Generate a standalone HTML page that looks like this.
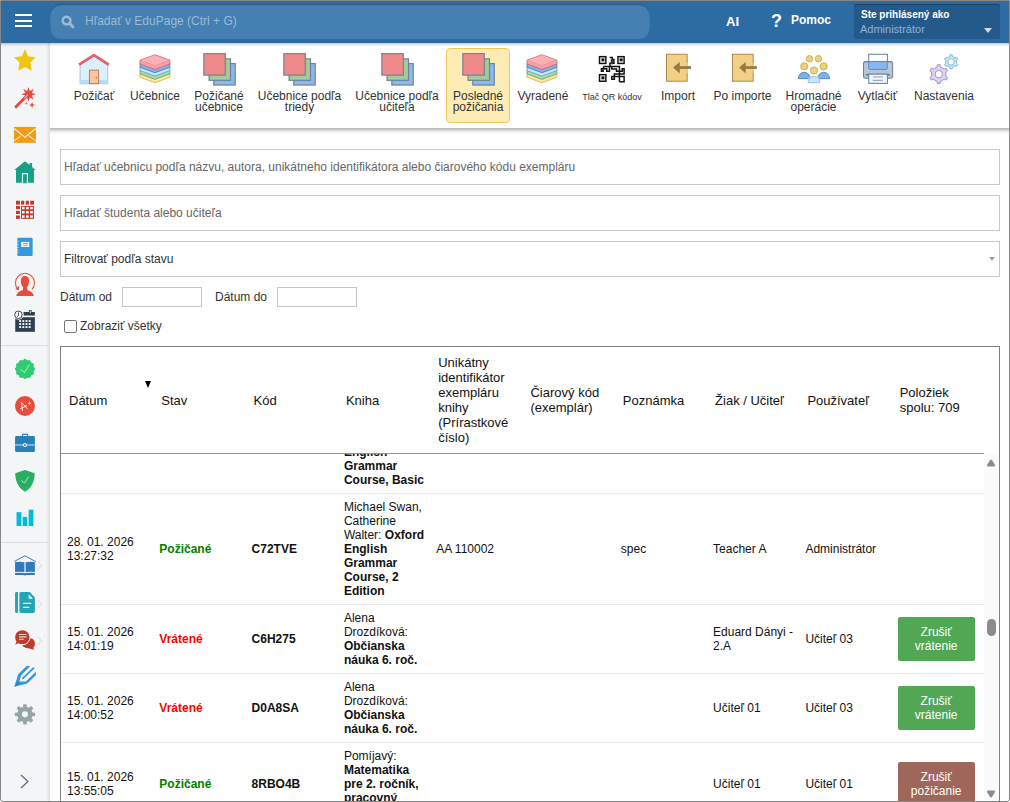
<!DOCTYPE html><html><head><meta charset="utf-8"><style>
*{box-sizing:border-box;margin:0;padding:0}
html,body{width:1010px;height:802px;overflow:hidden;background:#fff;font-family:"Liberation Sans",sans-serif;color:#333}
#frame{position:absolute;left:0;top:0;width:1010px;height:802px;overflow:hidden}
#border{position:absolute;left:0;top:0;width:1010px;height:802px;border:1px solid #878787;border-radius:0 0 3px 3px;z-index:50}
.a{position:absolute}
#hdr{position:absolute;left:1px;top:1px;width:1008px;height:42px;background:#2c6ca3}
#search{position:absolute;left:50px;top:4px;width:600px;height:35px;border-radius:11px;background:#4480b2;box-shadow:inset 0 1px 1.5px rgba(0,0,0,.35)}
#search span{position:absolute;left:35px;top:10px;font-size:12px;color:#9dbad6}
#user{position:absolute;left:854px;top:4px;width:146px;height:35px;background:#245a89;border-radius:2px;box-shadow:inset 0 1px 1px rgba(0,0,0,.3)}
#user .l1{position:absolute;left:7px;top:5px;font-size:10px;font-weight:bold;color:#fff}
#user .l2{position:absolute;left:6px;top:19px;font-size:11px;color:#8db4dc}
#user .tri{position:absolute;left:130px;top:24px;width:0;height:0;border-left:4px solid transparent;border-right:4px solid transparent;border-top:5px solid #d0d8e0}
#side{position:absolute;left:1px;top:43px;width:49px;height:760px;background:linear-gradient(to right,#f4f5f7 45px,#dcdee1 49px)}
.sep{position:absolute;left:1px;width:48px;height:1px;background:#dcdde0}
#tb{position:absolute;left:50px;top:43px;width:960px;height:85px;background:#fff}
#tbs{position:absolute;left:50px;top:128px;width:960px;height:6px;background:linear-gradient(#b9b9b9,#c6c6c6 25%,#e6e6e6 50%,#f6f6f6 75%,#fff)}
.tt{position:absolute;top:91px;width:120px;text-align:center;font-size:12px;line-height:11px;color:#333;white-space:nowrap}
#hl{position:absolute;left:446px;top:48px;width:64px;height:75px;background:#fdedb5;border:1px solid #f0c75a;border-radius:4px}
.inp{position:absolute;left:60px;width:940px;height:36px;border:1px solid #c9c9c9;font-size:12px;color:#666;padding:10px 0 0 3px}
.lab{position:absolute;font-size:12px;color:#333}
.dinp{position:absolute;top:287px;width:80px;height:20px;border:1px solid #c6c6c6}
#tbl{position:absolute;left:60px;top:346px;width:940px;height:470px;border:1px solid #808080}
table{border-collapse:separate;border-spacing:0;table-layout:fixed}
#head{position:absolute;left:0;top:0;width:923px;height:107px;border-bottom:1px solid #8797ab}
#head td{width:92.3px;padding:0 8px;font-size:13px;line-height:15px;color:#111;vertical-align:middle;height:106px}
#body{position:absolute;left:0;top:107px;width:923px;height:360px;overflow:hidden}
#body table{position:absolute;left:0;top:-57px;width:923px}
#body td{width:92.3px;padding:6px 6px;font-size:12px;line-height:14px;color:#111;vertical-align:middle;border-bottom:1px solid #ebebeb}
#sb{position:absolute;left:923px;top:107px;width:14px;height:360px;background:#fafafa}
.btn{display:block;width:77px;height:44px;border-radius:2px;color:#fff;text-align:center;padding-top:8px;font-size:12px;line-height:14px}
.g{background:#52a755}
.r{background:#a0665a}
#body td.ok{color:#008000;font-weight:bold}
#body td.no{color:#f00;font-weight:bold}
b{font-weight:bold}
</style></head><body><div id="frame"><div id="hdr"></div>
<div class="a" style="left:15px;top:14px;width:17px;height:2px;background:#fff"></div>
<div class="a" style="left:15px;top:19.5px;width:17px;height:2px;background:#fff"></div>
<div class="a" style="left:15px;top:25px;width:17px;height:2px;background:#fff"></div>
<div id="search"><span>Hľadať v EduPage (Ctrl + G)</span></div>
<svg style="position:absolute;left:61px;top:15px" width="14" height="14" viewBox="0 0 14 14" ><circle cx="5.6" cy="5.6" r="3.9" fill="none" stroke="#9dbad6" stroke-width="2.4"/><path d="M8.6 8.6 L12 12" stroke="#9dbad6" stroke-width="2.8" stroke-linecap="round"/></svg>
<div class="a" style="left:726px;top:14px;font-size:13px;font-weight:bold;color:#fff">AI</div>
<div class="a" style="left:771px;top:11px;font-size:18px;font-weight:bold;color:#fff">?</div>
<div class="a" style="left:791px;top:13px;font-size:12px;font-weight:bold;color:#fff">Pomoc</div>
<div id="user"><div class="l1">Ste prihlásený ako</div><div class="l2">Administrátor</div><div class="tri"></div></div>
<div id="side"></div>
<div class="sep" style="top:345px"></div>
<div class="sep" style="top:542px"></div>
<svg style="position:absolute;left:10px;top:45px" width="30" height="30" viewBox="0 0 802 802" ><polygon fill="#f1c40f" points="400,110 480,300 690,330 545,465 580,690 400,590 220,690 255,465 105,330 320,300"/></svg>
<svg style="position:absolute;left:10px;top:83px" width="30" height="30" viewBox="0 0 802 802" ><g fill="#e74c3c"><polygon points="495,105 531,212 633,162 583,264 690,300 583,336 633,438 531,388 495,495 459,388 357,438 407,336 300,300 407,264 357,162 459,212"/><polygon points="590,500 611,569 680,590 611,611 590,680 569,611 500,590 569,569"/><polygon points="435,500 446,534 480,545 446,556 435,590 424,556 390,545 424,534"/></g><path d="M160 635 L470 325" stroke="#e74c3c" stroke-width="80" stroke-linecap="round"/><path d="M385 405 L475 315" stroke="#fff" stroke-width="26"/></svg>
<svg style="position:absolute;left:10px;top:120px" width="30" height="30" viewBox="0 0 802 802" ><rect x="105" y="185" width="590" height="425" fill="#f39c12"/><path d="M105 225 L400 462 L695 225" fill="none" stroke="#fff" stroke-width="28"/><path d="M105 565 L295 420 M695 565 L505 420" stroke="#fff" stroke-width="24"/></svg>
<svg style="position:absolute;left:10px;top:157px" width="30" height="30" viewBox="0 0 802 802" ><polygon fill="#16a085" points="115,345 400,115 525,215 525,160 590,160 590,265 685,345 640,345 640,690 160,690 160,345"/><rect x="318" y="428" width="164" height="270" fill="#fff" opacity=".85"/><rect x="350" y="462" width="100" height="240" fill="#16a085"/></svg>
<svg style="position:absolute;left:10px;top:194px" width="30" height="30" viewBox="0 0 802 802" ><g fill="#c0392b"><rect x="160" y="180" width="105" height="105"/><rect x="295" y="180" width="85" height="105"/><rect x="420" y="180" width="85" height="105"/><rect x="540" y="180" width="100" height="105"/><rect x="160" y="320" width="105" height="85"/><rect x="160" y="450" width="105" height="85"/><rect x="160" y="575" width="105" height="90"/><rect x="295" y="320" width="345" height="345"/></g><g fill="#fff"><rect x="320" y="345" width="70" height="65"/><rect x="320" y="455" width="70" height="65"/><rect x="320" y="570" width="70" height="65"/><rect x="430" y="345" width="70" height="65"/><rect x="430" y="455" width="70" height="65"/><rect x="430" y="570" width="70" height="65"/><rect x="540" y="345" width="70" height="65"/><rect x="540" y="455" width="70" height="65"/><rect x="540" y="570" width="70" height="65"/></g></svg>
<svg style="position:absolute;left:10px;top:232px" width="30" height="30" viewBox="0 0 802 802" ><rect x="195" y="155" width="410" height="485" rx="35" fill="#3498db"/><rect x="300" y="265" width="215" height="135" fill="#fff"/><path d="M350 307 H475 M350 357 H475" stroke="#3498db" stroke-width="22"/><path d="M165 245 H235 M165 330 H235 M165 410 H235 M165 490 H235 M165 545 H235" stroke="#fff" stroke-width="14" opacity=".9"/></svg>
<svg style="position:absolute;left:10px;top:269px" width="30" height="30" viewBox="0 0 802 802" ><path d="M215 545 A255 255 0 1 1 585 545" fill="none" stroke="#e74c3c" stroke-width="28"/><polygon fill="#e74c3c" points="140,540 250,450 240,560"/><path fill="#e74c3c" d="M400 190 C 470 190 515 240 510 320 C 508 390 490 450 455 490 L 460 560 C 560 590 625 640 640 720 L 165 720 C 180 640 245 590 345 560 L 350 490 C 310 450 290 390 290 320 C 285 240 330 190 400 190Z"/></svg>
<svg style="position:absolute;left:10px;top:306px" width="30" height="30" viewBox="0 0 802 802" ><rect x="140" y="300" width="525" height="390" fill="#2c3e50"/><rect x="360" y="160" width="305" height="95" fill="#2c3e50"/><rect x="505" y="110" width="75" height="95" rx="20" fill="#2c3e50"/><rect x="530" y="130" width="25" height="60" fill="#f4f5f7"/><g fill="#fff"><rect x="245" y="378" width="52" height="48"/><rect x="245" y="458" width="52" height="48"/><rect x="245" y="540" width="52" height="48"/><rect x="330" y="378" width="52" height="48"/><rect x="330" y="458" width="52" height="48"/><rect x="330" y="540" width="52" height="48"/><rect x="415" y="378" width="52" height="48"/><rect x="415" y="458" width="52" height="48"/><rect x="415" y="540" width="52" height="48"/><rect x="500" y="378" width="52" height="48"/><rect x="500" y="458" width="52" height="48"/><rect x="500" y="540" width="52" height="48"/></g><circle cx="225" cy="235" r="135" fill="#f4f5f7"/><circle cx="225" cy="235" r="100" fill="#fff" stroke="#2c3e50" stroke-width="26"/><path d="M228 170 V250 L195 285" fill="none" stroke="#2c3e50" stroke-width="24"/></svg>
<svg style="position:absolute;left:10px;top:354px" width="30" height="30" viewBox="0 0 802 802" ><polygon fill="#2ecc71" points="669,400 664,417 653,433 640,448 633,462 632,479 636,498 638,517 633,534 620,547 602,555 584,562 570,570 562,584 555,602 547,620 534,633 517,638 498,636 479,632 462,633 448,640 433,653 417,664 400,669 383,664 367,653 352,640 338,633 321,632 302,636 283,638 266,633 253,620 245,602 238,584 230,570 216,562 198,555 180,547 167,534 162,517 164,498 168,479 167,462 160,448 147,433 136,417 131,400 136,383 147,367 160,352 167,338 168,321 164,302 162,283 167,266 180,253 198,245 216,238 230,230 238,216 245,198 253,180 265,167 283,162 302,164 321,168 338,167 352,160 367,147 383,136 400,131 417,136 433,147 448,160 462,167 479,168 498,164 517,162 534,167 547,180 555,198 562,216 570,230 584,238 602,245 620,253 633,265 638,283 636,302 632,321 633,338 640,352 653,367 664,383"/><path d="M278 410 L390 495 L522 278" fill="none" stroke="#fff" stroke-width="20" opacity=".85"/></svg>
<svg style="position:absolute;left:10px;top:391px" width="30" height="30" viewBox="0 0 802 802" ><circle cx="400" cy="400" r="267" fill="#e74c3c"/><path d="M330 525 L310 310 L470 478 M280 470 L440 395" fill="none" stroke="#fff" stroke-width="22" stroke-linecap="round"/><path d="M520 290 V370 M480 330 H560" stroke="#fff" stroke-width="22"/></svg>
<svg style="position:absolute;left:10px;top:428px" width="30" height="30" viewBox="0 0 802 802" ><rect x="320" y="155" width="165" height="90" rx="25" fill="#2980b9"/><rect x="350" y="185" width="105" height="60" fill="#f4f5f7"/><rect x="135" y="215" width="530" height="425" rx="30" fill="#2980b9"/><rect x="135" y="428" width="530" height="50" fill="#82b6dc"/><circle cx="400" cy="453" r="52" fill="#fff"/><circle cx="400" cy="453" r="28" fill="#2980b9"/></svg>
<svg style="position:absolute;left:10px;top:466px" width="30" height="30" viewBox="0 0 802 802" ><path fill="#27ae60" d="M400 105 L660 195 C660 420 560 600 400 690 C240 600 140 420 140 195Z"/><path d="M298 382 L385 458 L500 280" fill="none" stroke="#fff" stroke-width="20" opacity=".85"/></svg>
<svg style="position:absolute;left:10px;top:503px" width="30" height="30" viewBox="0 0 802 802" ><g fill="#00bcd4"><rect x="175" y="245" width="130" height="370"/><rect x="338" y="372" width="122" height="243"/><rect x="498" y="178" width="127" height="437"/></g></svg>
<svg style="position:absolute;left:10px;top:551px" width="36" height="30" viewBox="0 0 962 802" ><path d="M115 280 L400 128 L690 285" fill="none" stroke="#2e7cb8" stroke-width="26"/><path fill="#2e7cb8" d="M135 300 Q250 275 378 300 V560 Q250 545 135 560Z M425 300 Q550 275 665 300 V560 Q550 545 425 560Z"/><rect x="383" y="300" width="40" height="262" fill="#8fbbe0"/><path fill="#2e7cb8" d="M135 585 Q250 570 380 590 Q400 595 420 590 Q550 570 665 585 V640 H440 Q400 665 360 640 H135Z"/><path d="M745 290 L850 400 L745 505" fill="none" stroke="#d2d2d2" stroke-width="22"/></svg>
<svg style="position:absolute;left:10px;top:588px" width="36" height="30" viewBox="0 0 962 802" ><rect x="135" y="108" width="78" height="557" rx="40" fill="#22a6b3"/><rect x="176" y="108" width="37" height="557" fill="#22a6b3"/><path fill="#22a6b3" d="M290 108 H530 L665 255 V625 Q665 665 625 665 H290 Q250 665 250 625 V148 Q250 108 290 108Z"/><polygon fill="#fff" points="500,170 500,290 612,290"/><path d="M368 412 H552 M368 517 H502" stroke="#fff" stroke-width="38" stroke-linecap="round"/><path d="M745 320 L850 425 L745 530" fill="none" stroke="#d2d2d2" stroke-width="22"/></svg>
<svg style="position:absolute;left:10px;top:625px" width="36" height="30" viewBox="0 0 962 802" ><path fill="#c0392b" d="M560 360 C 630 360 665 430 665 500 C 665 560 640 600 610 615 L 660 655 C 600 650 560 635 520 625 C 400 615 320 570 320 505 C 320 440 440 360 560 360Z"/><circle cx="330" cy="330" r="215" fill="#f4f5f7"/><path fill="#c0392b" d="M330 140 C 440 140 520 225 520 325 C 520 430 440 510 330 510 C 290 510 255 500 225 485 L 135 525 L 175 445 C 150 410 140 370 140 325 C 140 225 220 140 330 140Z"/><path d="M240 255 H440 M240 318 H440 M240 380 H370" stroke="#fff" stroke-width="28" opacity=".8"/><path d="M745 320 L850 425 L745 530" fill="none" stroke="#d2d2d2" stroke-width="22"/></svg>
<svg style="position:absolute;left:10px;top:661px" width="30" height="30" viewBox="0 0 802 802" ><path fill="#3498db" d="M115 690 L220 355 L445 135 L540 135 L300 380 L250 550 L425 545 L690 290 L690 380 L460 600Z"/><path d="M345 465 L628 192" stroke="#3498db" stroke-width="48" stroke-linecap="round"/><polygon fill="#2b80c0" points="115,690 210,545 270,610"/></svg>
<svg style="position:absolute;left:10px;top:699px" width="30" height="30" viewBox="0 0 802 802" ><path fill="#95a5a6" fill-rule="evenodd" d="M350.2,211.1 L354.3,138.8 L445.7,138.8 L449.8,211.1 L505.4,234.2 L559.4,185.9 L624.1,250.6 L575.8,304.6 L598.9,360.2 L671.2,364.3 L671.2,455.7 L598.9,459.8 L575.8,515.4 L624.1,569.4 L559.4,634.1 L505.4,585.8 L449.8,608.9 L445.7,681.2 L354.3,681.2 L350.2,608.9 L294.6,585.8 L240.6,634.1 L175.9,569.4 L224.2,515.4 L201.1,459.8 L128.8,455.7 L128.8,364.3 L201.1,360.2 L224.2,304.6 L175.9,250.6 L240.6,185.9 L294.6,234.2Z M318,410 a82,82 0 1,0 164,0 a82,82 0 1,0 -164,0Z"/></svg>
<svg style="position:absolute;left:17px;top:772px" width="14" height="18" viewBox="0 0 14 18" ><path d="M4 3 L11 9.5 L4 16" fill="none" stroke="#5b6e86" stroke-width="1.3"/></svg>
<div id="tb"></div><div id="tbs"></div><div class="a" style="left:1px;top:43px;width:1008px;height:4px;z-index:5;background:linear-gradient(rgba(50,40,30,.26),rgba(0,0,0,.1) 40%,rgba(0,0,0,.035) 70%,rgba(0,0,0,0))"></div>
<div id="hl"></div>
<svg style="position:absolute;left:74px;top:50px" width="40" height="38" viewBox="0 0 844 802" ><polygon points="128,320 420,130 712,320 712,712 128,712" fill="#dcf0fc" stroke="#a9c5e6" stroke-width="22"/><rect x="135" y="635" width="570" height="70" fill="#b9dcf5"/><rect x="325" y="425" width="195" height="285" fill="#fcc59a" stroke="#b07a5a" stroke-width="20"/><circle cx="470" cy="585" r="14" fill="#8a5a3a"/><path d="M105 310 L420 110 L735 310" fill="none" stroke="#e05a64" stroke-width="55" stroke-linejoin="round"/><path d="M105 310 L420 110 L735 310" fill="none" stroke="#f39a9a" stroke-width="12" stroke-dasharray="25 25"/></svg>
<svg style="position:absolute;left:136px;top:50px" width="40" height="38" viewBox="0 0 844 802" ><polygon points="400,380 715,495 715,575 400,690 85,575 85,495" fill="#fde99a" stroke="#d2b24c" stroke-width="18" stroke-linejoin="round"/><polygon points="400,310 715,425 715,505 400,620 85,505 85,425" fill="#aad9a5" stroke="#6aa86a" stroke-width="18" stroke-linejoin="round"/><polygon points="400,240 715,355 715,435 400,550 85,435 85,355" fill="#c5e8fb" stroke="#6a9fd6" stroke-width="18" stroke-linejoin="round"/><polygon points="400,170 715,285 715,365 400,480 85,365 85,285" fill="#7fb2ea" stroke="#4a7dc8" stroke-width="18" stroke-linejoin="round"/><polygon points="400,100 715,215 715,295 400,410 85,295 85,215" fill="#f7a0a5" stroke="#d9606a" stroke-width="18" stroke-linejoin="round"/><polygon points="400,112 700,218 400,325 100,218" fill="#fbb0b5"/><path d="M90 218 L400 330 L710 218" fill="none" stroke="#e98890" stroke-width="10"/></svg>
<svg style="position:absolute;left:523px;top:50px" width="40" height="38" viewBox="0 0 844 802" ><polygon points="400,380 715,495 715,575 400,690 85,575 85,495" fill="#fde99a" stroke="#d2b24c" stroke-width="18" stroke-linejoin="round"/><polygon points="400,310 715,425 715,505 400,620 85,505 85,425" fill="#aad9a5" stroke="#6aa86a" stroke-width="18" stroke-linejoin="round"/><polygon points="400,240 715,355 715,435 400,550 85,435 85,355" fill="#c5e8fb" stroke="#6a9fd6" stroke-width="18" stroke-linejoin="round"/><polygon points="400,170 715,285 715,365 400,480 85,365 85,285" fill="#7fb2ea" stroke="#4a7dc8" stroke-width="18" stroke-linejoin="round"/><polygon points="400,100 715,215 715,295 400,410 85,295 85,215" fill="#f7a0a5" stroke="#d9606a" stroke-width="18" stroke-linejoin="round"/><polygon points="400,112 700,218 400,325 100,218" fill="#fbb0b5"/><path d="M90 218 L400 330 L710 218" fill="none" stroke="#e98890" stroke-width="10"/></svg>
<svg style="position:absolute;left:199px;top:50px" width="40" height="38" viewBox="0 0 844 802" ><rect x="312" y="287" width="453" height="453" fill="#8bb8f0" stroke="#6e8193" stroke-width="24"/><rect x="212" y="187" width="453" height="453" fill="#a0cb9b" stroke="#6e8193" stroke-width="24"/><rect x="102" y="77" width="453" height="453" fill="#f08a8a" stroke="#6e8193" stroke-width="24"/></svg>
<svg style="position:absolute;left:279px;top:50px" width="40" height="38" viewBox="0 0 844 802" ><rect x="312" y="287" width="453" height="453" fill="#8bb8f0" stroke="#6e8193" stroke-width="24"/><rect x="212" y="187" width="453" height="453" fill="#a0cb9b" stroke="#6e8193" stroke-width="24"/><rect x="102" y="77" width="453" height="453" fill="#f08a8a" stroke="#6e8193" stroke-width="24"/></svg>
<svg style="position:absolute;left:377px;top:50px" width="40" height="38" viewBox="0 0 844 802" ><rect x="312" y="287" width="453" height="453" fill="#8bb8f0" stroke="#6e8193" stroke-width="24"/><rect x="212" y="187" width="453" height="453" fill="#a0cb9b" stroke="#6e8193" stroke-width="24"/><rect x="102" y="77" width="453" height="453" fill="#f08a8a" stroke="#6e8193" stroke-width="24"/></svg>
<svg style="position:absolute;left:458px;top:50px" width="40" height="38" viewBox="0 0 844 802" ><rect x="312" y="287" width="453" height="453" fill="#8bb8f0" stroke="#6e8193" stroke-width="24"/><rect x="212" y="187" width="453" height="453" fill="#a0cb9b" stroke="#6e8193" stroke-width="24"/><rect x="102" y="77" width="453" height="453" fill="#f08a8a" stroke="#6e8193" stroke-width="24"/></svg>
<svg style="position:absolute;left:594px;top:52px" width="36" height="34" viewBox="0 0 849 802" ><g fill="none" stroke="#111" stroke-width="35"><rect x="130" y="110" width="150" height="160"/><rect x="565" y="110" width="145" height="160"/><rect x="130" y="535" width="150" height="155"/><path d="M370 130 H430 V175 H470 V265 H375 V340"/><path d="M225 340 H600 V700"/><path d="M225 340 V395 H175 V455 H215 V420"/><path d="M235 395 H300 V455 H365 V340"/><path d="M420 340 V400 H530 V455 H665 V395 H710 V520 H480 V580 H420 V645 H480 V580 H710 V700 H600"/></g><g fill="#111"><rect x="175" y="150" width="70" height="70"/><rect x="605" y="150" width="70" height="70"/><rect x="175" y="575" width="70" height="70"/><rect x="395" y="170" width="55" height="120" fill="#333"/></g></svg>
<svg style="position:absolute;left:660px;top:50px" width="36" height="36" viewBox="0 0 802 802" ><rect x="145" y="95" width="460" height="600" fill="#f4cf86" stroke="#a8894f" stroke-width="22"/><rect x="590" y="290" width="30" height="220" fill="#f4cf86"/><polygon points="290,390 440,265 440,525" fill="#957a44"/><rect x="430" y="360" width="260" height="62" fill="#957a44"/></svg>
<svg style="position:absolute;left:726px;top:50px" width="36" height="36" viewBox="0 0 802 802" ><rect x="145" y="95" width="460" height="600" fill="#f4cf86" stroke="#a8894f" stroke-width="22"/><rect x="590" y="290" width="30" height="220" fill="#f4cf86"/><polygon points="290,390 440,265 440,525" fill="#957a44"/><rect x="430" y="360" width="260" height="62" fill="#957a44"/></svg>
<svg style="position:absolute;left:795px;top:50px" width="38" height="38" viewBox="0 0 802 802" ><g stroke-width="18"><path d="M70 605 A125 135 0 0 1 320 605Z" fill="#7fb0e8" stroke="#4a7fc0"/><path d="M480 605 A125 135 0 0 1 730 605Z" fill="#7fb0e8" stroke="#4a7fc0"/><path d="M275 690 A125 135 0 0 1 525 690Z" fill="#c5e8fb" stroke="#fff" stroke-width="30"/><path d="M275 690 A125 135 0 0 1 525 690Z" fill="#c5e8fb" stroke="#8ab8e0"/><g fill="#ecd27a" stroke="#c9a84a"><circle cx="305" cy="185" r="68"/><circle cx="495" cy="185" r="68"/><circle cx="195" cy="345" r="76"/><circle cx="605" cy="345" r="76"/><circle cx="400" cy="435" r="76"/></g></g></svg>
<svg style="position:absolute;left:859px;top:50px" width="38" height="38" viewBox="0 0 802 802" ><rect x="205" y="90" width="395" height="170" fill="#fff" stroke="#6e839b" stroke-width="22"/><rect x="95" y="245" width="615" height="350" rx="45" fill="#b7c5d8" stroke="#6e839b" stroke-width="22"/><rect x="205" y="245" width="390" height="165" rx="25" fill="#8ab6ee" stroke="#5a86c4" stroke-width="20"/><circle cx="650" cy="330" r="20" fill="#f5e070"/><path d="M165 522 H635" stroke="#6e839b" stroke-width="45" stroke-linecap="round"/><rect x="205" y="510" width="395" height="195" fill="#eef5fa" stroke="#6e839b" stroke-width="22"/><path d="M295 568 H505" stroke="#9aabbd" stroke-width="25"/><path d="M295 640 H505" stroke="#7a8ea5" stroke-width="18"/></svg>
<svg style="position:absolute;left:925px;top:50px" width="38" height="38" viewBox="0 0 802 802" ><path fill="#ddd3f2" stroke="#9a7fbf" stroke-width="18" fill-rule="evenodd" d="M255.1,355.9 L259.9,312.3 L320.1,312.3 L324.9,355.9 L406.0,402.7 L446.2,385.0 L476.3,437.3 L440.9,463.1 L440.9,556.9 L476.3,582.7 L446.2,635.0 L406.0,617.3 L324.9,664.1 L320.1,707.7 L259.9,707.7 L255.1,664.1 L174.0,617.3 L133.8,635.0 L103.7,582.7 L139.1,556.9 L139.1,463.1 L103.7,437.3 L133.8,385.0 L174.0,402.7Z M212,510 a78,78 0 1,0 156,0 a78,78 0 1,0 -156,0Z"/><path fill="#c5e8fb" stroke="#7ab0cc" stroke-width="18" fill-rule="evenodd" d="M524.0,134.9 L527.1,99.7 L572.9,99.7 L576.0,134.9 L636.7,169.9 L668.7,155.0 L691.6,194.7 L662.7,215.0 L662.7,285.0 L691.6,305.3 L668.7,345.0 L636.7,330.1 L576.0,365.1 L572.9,400.3 L527.1,400.3 L524.0,365.1 L463.3,330.1 L431.3,345.0 L408.4,305.3 L437.3,285.0 L437.3,215.0 L408.4,194.7 L431.3,155.0 L463.3,169.9Z M482,250 a68,68 0 1,0 136,0 a68,68 0 1,0 -136,0Z"/></svg>
<div class="tt" style="left:34px">Požičať</div>
<div class="tt" style="left:95px">Učebnice</div>
<div class="tt" style="left:159px">Požičané<br>učebnice</div>
<div class="tt" style="left:239.5px">Učebnice podľa<br>triedy</div>
<div class="tt" style="left:337px">Učebnice podľa<br>učiteľa</div>
<div class="tt" style="left:418px">Posledné<br>požičania</div>
<div class="tt" style="left:483px">Vyradené</div>
<div class="tt" style="left:552px"><span style="font-size:9px">Tlač QR kódov</span></div>
<div class="tt" style="left:618px">Import</div>
<div class="tt" style="left:682.5px">Po importe</div>
<div class="tt" style="left:753.5px">Hromadné<br>operácie</div>
<div class="tt" style="left:817.5px">Vytlačiť</div>
<div class="tt" style="left:884px">Nastavenia</div>
<div class="inp" style="top:149px">Hľadať učebnicu podľa názvu, autora, unikátneho identifikátora alebo čiarového kódu exempláru</div>
<div class="inp" style="top:195px">Hľadať študenta alebo učiteľa</div>
<div class="inp" style="top:241px;color:#333">Filtrovať podľa stavu</div>
<div class="a" style="left:989px;top:257px;width:0;height:0;border-left:3.5px solid transparent;border-right:3.5px solid transparent;border-top:4px solid #a5a5a5"></div>
<div class="lab" style="left:60px;top:290px">Dátum od</div>
<div class="dinp" style="left:122px"></div>
<div class="lab" style="left:215px;top:290px">Dátum do</div>
<div class="dinp" style="left:277px"></div>
<div class="a" style="left:64px;top:320px;width:13px;height:13px;border:1px solid #767676;border-radius:2px;background:#fff"></div>
<div class="lab" style="left:80px;top:319px">Zobraziť všetky</div>
<div id="tbl"><div id="head"><table style="width:923px"><tr>
<td>Dátum</td><td>Stav</td><td>Kód</td><td>Kniha</td><td>Unikátny identifikátor exempláru knihy (Prírastkové číslo)</td><td>Čiarový kód (exemplár)</td><td>Poznámka</td><td>Žiak / Učiteľ</td><td>Používateľ</td><td>Položiek spolu: 709</td>
</tr></table></div><div id="body"><table>
<tr><td></td><td></td><td></td><td>Michael Swan, Catherine Walter: <b>Oxford English Grammar Course, Basic</b></td><td></td><td></td><td></td><td></td><td></td><td></td></tr>
<tr><td>28. 01. 2026 13:27:32</td><td class="ok">Požičané</td><td><b>C72TVE</b></td><td>Michael Swan, Catherine Walter: <b>Oxford English Grammar Course, 2 Edition</b></td><td>AA 110002</td><td></td><td>spec</td><td>Teacher A</td><td>Administrátor</td><td></td></tr>
<tr><td>15. 01. 2026 14:01:19</td><td class="no">Vrátené</td><td><b>C6H275</b></td><td>Alena Drozdíková: <b>Občianska náuka 6. roč.</b></td><td></td><td></td><td></td><td>Eduard Dányi - 2.A</td><td>Učiteľ 03</td><td><div class="btn g">Zrušiť vrátenie</div></td></tr>
<tr><td>15. 01. 2026 14:00:52</td><td class="no">Vrátené</td><td><b>D0A8SA</b></td><td>Alena Drozdíková: <b>Občianska náuka 6. roč.</b></td><td></td><td></td><td></td><td>Učiteľ 01</td><td>Učiteľ 03</td><td><div class="btn g">Zrušiť vrátenie</div></td></tr>
<tr><td>15. 01. 2026 13:55:05</td><td class="ok">Požičané</td><td><b>8RBO4B</b></td><td>Pomíjavý: <b>Matematika pre 2. ročník, pracovný zošit</b></td><td></td><td></td><td></td><td>Učiteľ 01</td><td>Učiteľ 01</td><td><div class="btn r">Zrušiť požičanie</div></td></tr>
</table></div><div id="sb"></div></div>
<div class="a" style="left:145px;top:381px;width:0;height:0;border-left:3.5px solid transparent;border-right:3.5px solid transparent;border-top:7px solid #000"></div>
<svg style="position:absolute;left:984px;top:456px" width="14" height="12" viewBox="0 0 14 12" ><polygon points="4,9.3 7,4.7 10,9.3" fill="#8c8c8c" stroke="#8c8c8c" stroke-width="2.2" stroke-linejoin="round"/></svg>
<div class="a" style="left:987px;top:619px;width:9px;height:17px;border-radius:4.5px;background:#8c8c8c"></div>
<svg style="position:absolute;left:984px;top:788px" width="14" height="12" viewBox="0 0 14 12" ><polygon points="4,3.7 7,8.3 10,3.7" fill="#8c8c8c" stroke="#8c8c8c" stroke-width="2.2" stroke-linejoin="round"/></svg></div><div id="border"></div></body></html>
